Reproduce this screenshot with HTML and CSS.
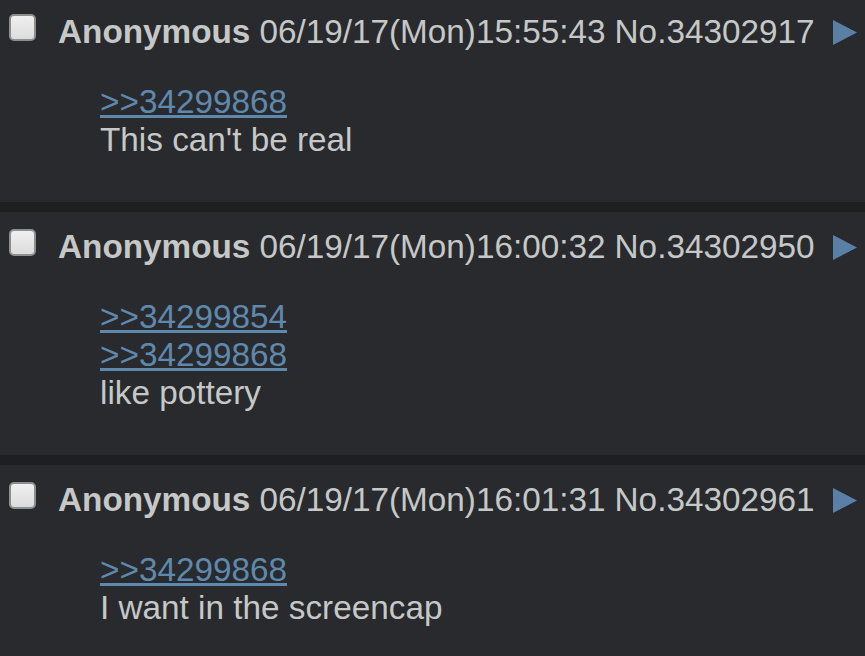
FILE: index.html
```html
<!DOCTYPE html>
<html lang="en">
<head>
    <meta charset="UTF-8">
    <title>Thread</title>
    <link rel="stylesheet" href="styles.css">
</head>
<body>
    <div class="thread">
        <div class="post">
            <div class="post-info">
                <span class="check"></span>
                <span class="name">Anonymous</span>
                <span class="date">06/19/17(Mon)15:55:43</span>
                <span class="num">No.34302917</span>
                <svg class="menu" width="24" height="25" viewBox="0 0 24 25"><polygon points="0,0 24,12.5 0,25" /></svg>
            </div>
            <blockquote class="message">
                <a href="#p34299868" class="quotelink">&gt;&gt;34299868</a><br>
                This can't be real
            </blockquote>
        </div>

        <div class="post">
            <div class="post-info">
                <span class="check"></span>
                <span class="name">Anonymous</span>
                <span class="date">06/19/17(Mon)16:00:32</span>
                <span class="num">No.34302950</span>
                <svg class="menu" width="24" height="25" viewBox="0 0 24 25"><polygon points="0,0 24,12.5 0,25" /></svg>
            </div>
            <blockquote class="message">
                <a href="#p34299854" class="quotelink">&gt;&gt;34299854</a><br>
                <a href="#p34299868" class="quotelink">&gt;&gt;34299868</a><br>
                like pottery
            </blockquote>
        </div>

        <div class="post">
            <div class="post-info">
                <span class="check"></span>
                <span class="name">Anonymous</span>
                <span class="date">06/19/17(Mon)16:01:31</span>
                <span class="num">No.34302961</span>
                <svg class="menu" width="24" height="25" viewBox="0 0 24 25"><polygon points="0,0 24,12.5 0,25" /></svg>
            </div>
            <blockquote class="message">
                <a href="#p34299868" class="quotelink">&gt;&gt;34299868</a><br>
                I want in the screencap
            </blockquote>
        </div>
    </div>
</body>
</html>
```

FILE: styles.css
```css
body {
    margin: 0;
    background-color: #1d1f21;
    color: #c5c8c6;
    font-family: "Liberation Sans", Arial, sans-serif;
    font-size: 33.3px;
    overflow: hidden;
}
.thread {
    margin-top: -3px;
}
.post {
    background-color: #282a2e;
    padding: 15px 0 43px 0;
    margin-bottom: 10px;
}
.post-info {
    display: flex;
    align-items: center;
    height: 38px;
    line-height: 38px;
    padding-top: 1px;
    white-space: nowrap;
}
.check {
    width: 23px;
    height: 23px;
    margin-left: 9px;
    margin-top: -10px;
    margin-right: 22px;
    background: linear-gradient(#f0f0f0, #dcdcdc);
    border: 2px solid #8e8e8e;
    border-radius: 5px;
    flex-shrink: 0;
}
.name {
    font-weight: bold;
    margin-right: 9px;
}
.date {
    margin-right: 9px;
}
.menu {
    margin-left: 18px;
    fill: #5b80a6;
    flex-shrink: 0;
}
.message {
    margin: 32px 0 0 100px;
    line-height: 38px;
}
.quotelink {
    color: #5f89ac;
    text-decoration: underline;
}
```
